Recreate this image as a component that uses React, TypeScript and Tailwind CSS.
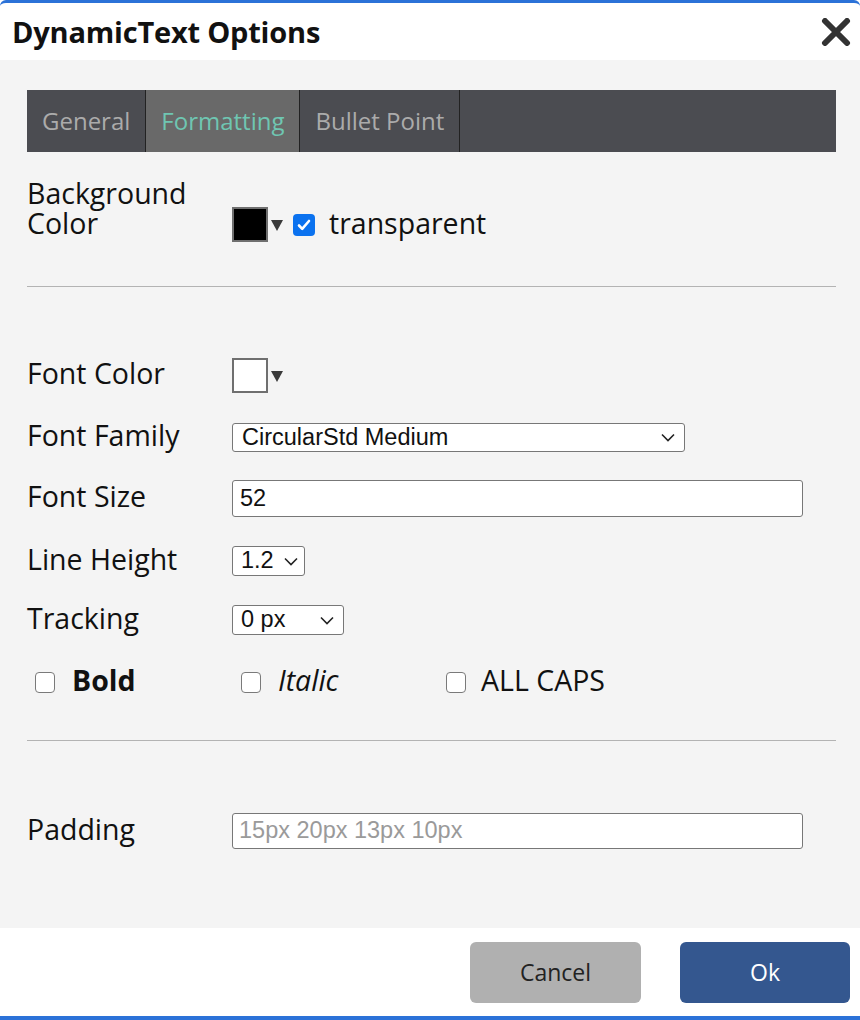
import React from 'react';

const OPEN = { fontFamily: '"Open Sans", "Noto Sans", sans-serif' };
const ARIAL = { fontFamily: '"Liberation Sans", Arial, sans-serif' };

function Chevron() {
  return (
    <svg width="14" height="9" viewBox="0 0 14 9" fill="none" stroke="#222" strokeWidth="1.6">
      <path d="M1 1.5l6 6 6-6" />
    </svg>
  );
}

function Swatch({ color }: { color: string }) {
  return (
    <div className="flex items-center">
      <div className={`w-[36px] h-[35px] border-2 border-[#6f6f6f] ${color}`}></div>
      <span className="ml-[3px] mt-[2px] w-0 h-0 border-l-[6px] border-r-[6px] border-t-[11px] border-l-transparent border-r-transparent border-t-[#3a3a3a]"></span>
    </div>
  );
}

function Box({ checked = false }: { checked?: boolean }) {
  if (checked) {
    return (
      <div className="w-[22px] h-[22px] rounded-[4px] bg-[#0b72ef] flex items-center justify-center">
        <svg width="14" height="12" viewBox="0 0 14 12" fill="none" stroke="white" strokeWidth="2.6" strokeLinecap="round" strokeLinejoin="round">
          <path d="M2 6.5l3.2 3.3L12 2" />
        </svg>
      </div>
    );
  }
  return <div className="w-[20px] h-[21px] rounded-[4px] border-[1.5px] border-[#7a7a7a] bg-white"></div>;
}

function Row({ label, children, className = '' }: { label: string; children: React.ReactNode; className?: string }) {
  return (
    <div className={`flex items-center ${className}`}>
      <div className="w-[205px] text-[28.5px] leading-[32px] pb-[5px] text-[#111]">{label}</div>
      {children}
    </div>
  );
}

export default function App() {
  return (
    <div
      className="w-[860px] h-[1020px] bg-white flex flex-col border-t-[3px] border-b-[4px] border-[#2b72d8] rounded-t-[6px] overflow-hidden"
      style={OPEN}
    >
      {/* header */}
      <div className="h-[57px] flex items-center justify-between pl-[12px] pr-[8px] shrink-0">
        <h1 className="text-[29px] font-bold text-[#111] tracking-[-0.2px]">DynamicText Options</h1>
        <svg width="30" height="28" viewBox="0 0 30 28" className="mr-[1px]">
          <path d="M4 3l22 22M26 3L4 25" stroke="#333" strokeWidth="6" strokeLinecap="round" />
        </svg>
      </div>

      {/* body */}
      <div className="flex-1 bg-[#f4f4f4] pl-[27px] pr-[24px] pt-[30px]">
        <div className="flex h-[62px] bg-[#4b4c51] text-[24px]">
          <div className="px-[15px] flex items-center text-[#ababab] border-r border-[#222]">General</div>
          <div className="px-[15px] flex items-center text-[#6fc6b2] bg-[#696969] border-r border-[#222]">Formatting</div>
          <div className="px-[15px] flex items-center text-[#ababab] border-r border-[#222]">Bullet Point</div>
        </div>

        <div className="flex items-start mt-[26px]">
          <div className="w-[205px] text-[28.5px] leading-[30px] text-[#111]">
            Background
            <br />
            Color
          </div>
          <div className="flex items-center mt-[29px]">
            <Swatch color="bg-black" />
            <div className="ml-[10px]">
              <Box checked />
            </div>
            <span className="ml-[14px] pb-[3px] text-[28.5px] text-[#111] leading-[32px]">transparent</span>
          </div>
        </div>

        <div className="h-px bg-[#b3b3b3] mt-[44px]"></div>

        <Row label="Font Color" className="mt-[71px] h-[35px]">
          <Swatch color="bg-white" />
        </Row>

        <Row label="Font Family" className="mt-[30px] h-[29px]">
          <div className="w-[453px] h-[29px] bg-white border border-[#777] rounded-[3px] flex items-center justify-between pl-[9px] pr-[9px] text-[23.5px] text-[#111]" style={ARIAL}>
            <span>CircularStd Medium</span>
            <Chevron />
          </div>
        </Row>

        <Row label="Font Size" className="mt-[28px] h-[37px]">
          <div className="w-[571px] h-[37px] bg-white border border-[#777] rounded-[3px] flex items-center pl-[7px] text-[23.5px] text-[#111]" style={ARIAL}>
            52
          </div>
        </Row>

        <Row label="Line Height" className="mt-[29px] h-[30px]">
          <div className="w-[73px] h-[30px] bg-white border border-[#777] rounded-[3px] flex items-center justify-between pl-[8px] pr-[6px] text-[23.5px] text-[#111]" style={ARIAL}>
            <span>1.2</span>
            <Chevron />
          </div>
        </Row>

        <Row label="Tracking" className="mt-[29px] h-[30px]">
          <div className="w-[112px] h-[30px] bg-white border border-[#777] rounded-[3px] flex items-center justify-between pl-[8px] pr-[9px] text-[23.5px] text-[#111]" style={ARIAL}>
            <span>0 px</span>
            <Chevron />
          </div>
        </Row>

        <div className="flex items-center h-[28px] mt-[33px] pl-[8px] text-[28.5px] text-[#111]">
          <div className="w-[206px] flex items-center gap-[17px]">
            <Box />
            <span className="font-bold pb-[3px]">Bold</span>
          </div>
          <div className="w-[205px] flex items-center gap-[17px]">
            <Box />
            <span className="italic pb-[3px]">Italic</span>
          </div>
          <div className="flex items-center gap-[15px]">
            <Box />
            <span className="pb-[3px]">ALL CAPS</span>
          </div>
        </div>

        <div className="h-px bg-[#b3b3b3] mt-[44px]"></div>

        <Row label="Padding" className="mt-[72px] h-[36px]">
          <div className="w-[571px] h-[36px] bg-white border border-[#777] rounded-[3px] flex items-center pl-[6px] text-[23.5px] text-[#9a9a9a]" style={ARIAL}>
            15px 20px 13px 10px
          </div>
        </Row>
      </div>

      {/* footer */}
      <div className="h-[88px] shrink-0 flex justify-end items-start pt-[14px] pr-[10px] gap-[39px]">
        <button className="w-[171px] h-[61px] rounded-[6px] bg-[#b0b0b0] text-[23px] text-[#222]">Cancel</button>
        <button className="w-[170px] h-[61px] rounded-[6px] bg-[#34578f] text-[23px] text-white">Ok</button>
      </div>
    </div>
  );
}
